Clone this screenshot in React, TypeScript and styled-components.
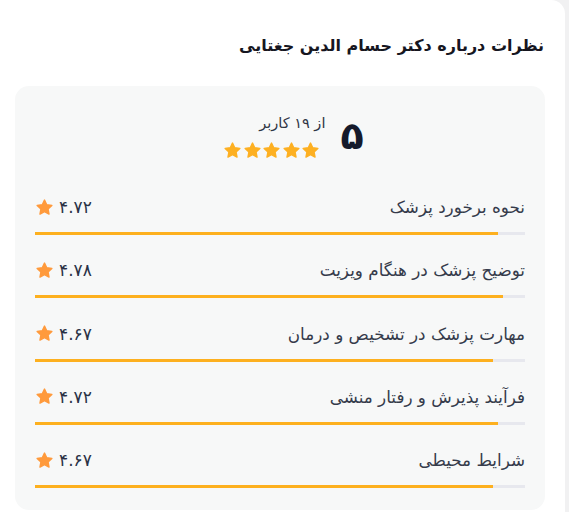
import React from 'react';
import styled, { createGlobalStyle } from 'styled-components';

const GlobalStyle = createGlobalStyle`
  html, body {
    margin: 0;
    padding: 0;
    background: #f1f1f2;
  }
  body {
    font-family: "DejaVu Sans", "Noto Sans", sans-serif;
  }
`;

const Card = styled.div`
  direction: rtl;
  width: 565px;
  box-sizing: border-box;
  background: #ffffff;
  border-top-right-radius: 14px;
  padding: 33px 20px 0 15px;
  min-height: 512px;
`;

const Title = styled.h2`
  margin: 0 1px 0 0;
  font-size: 16px;
  line-height: 26px;
  font-weight: 700;
  color: #16161f;
`;

const Panel = styled.div`
  margin-top: 27px;
  background: #f7f8f8;
  border-radius: 14px;
  padding: 25px 20px 22px;
`;

const Summary = styled.div`
  display: flex;
  align-items: center;
  justify-content: center;
  gap: 15px;
  padding-left: 27px;
`;

const BigScore = styled.div`
  font-size: 38px;
  font-weight: 700;
  line-height: 40px;
  color: #151a2b;
`;

const SummaryInfo = styled.div`
  display: flex;
  flex-direction: column;
  align-items: flex-start;
`;

const UsersText = styled.div`
  font-size: 14.5px;
  line-height: 24px;
  color: #2f3545;
`;

const Stars = styled.div`
  display: flex;
  gap: 0.5px;
  margin-top: 6px;
  margin-right: 5px;
`;

const Rows = styled.div`
  margin-top: 35px;
  display: flex;
  flex-direction: column;
  gap: 23.3px;
`;

const Row = styled.div`
  display: flex;
  flex-direction: column;
`;

const RowHead = styled.div`
  display: flex;
  align-items: center;
  justify-content: space-between;
  height: 24px;
`;

const Label = styled.span`
  font-size: 16.8px;
  color: #353b4b;
`;

const Score = styled.span`
  display: flex;
  align-items: center;
  gap: 5px;
  font-size: 17px;
  color: #2a3246;
`;

const Track = styled.div`
  margin-top: 13px;
  height: 3px;
  background: #e7e8ee;
  direction: ltr;
  display: flex;
`;

const Fill = styled.div`
  height: 100%;
  background: #fdb01f;
`;

const Star = ({ size, color }: { size: number; color: string }) => (
  <svg width={size} height={size} viewBox="0 0 24 24">
    <path
      d="M12 2.6l2.8 5.9 6.5.8-4.8 4.5 1.2 6.5L12 17.2l-5.7 3.1 1.2-6.5-4.8-4.5 6.5-.8z"
      fill={color}
      stroke={color}
      strokeWidth={1.8}
      strokeLinejoin="round"
    />
  </svg>
);

const items = [
  { label: 'نحوه برخورد پزشک', score: '۴.۷۲', value: 4.72 },
  { label: 'توضیح پزشک در هنگام ویزیت', score: '۴.۷۸', value: 4.78 },
  { label: 'مهارت پزشک در تشخیص و درمان', score: '۴.۶۷', value: 4.67 },
  { label: 'فرآیند پذیرش و رفتار منشی', score: '۴.۷۲', value: 4.72 },
  { label: 'شرایط محیطی', score: '۴.۶۷', value: 4.67 },
];

export default function App() {
  return (
    <>
      <GlobalStyle />
      <Card>
        <Title>نظرات درباره دکتر حسام الدین جغتایی</Title>
        <Panel>
          <Summary>
            <BigScore>۵</BigScore>
            <SummaryInfo>
              <UsersText>از ۱۹ کاربر</UsersText>
              <Stars>
                {[0, 1, 2, 3, 4].map((i) => (
                  <Star key={i} size={19} color="#fdb022" />
                ))}
              </Stars>
            </SummaryInfo>
          </Summary>
          <Rows>
            {items.map((it, i) => (
              <Row key={i}>
                <RowHead>
                  <Label>{it.label}</Label>
                  <Score>
                    <span>{it.score}</span>
                    <Star size={19} color="#ff9a3c" />
                  </Score>
                </RowHead>
                <Track>
                  <Fill style={{ width: `${(it.value / 5) * 100}%` }} />
                </Track>
              </Row>
            ))}
          </Rows>
        </Panel>
      </Card>
    </>
  );
}
